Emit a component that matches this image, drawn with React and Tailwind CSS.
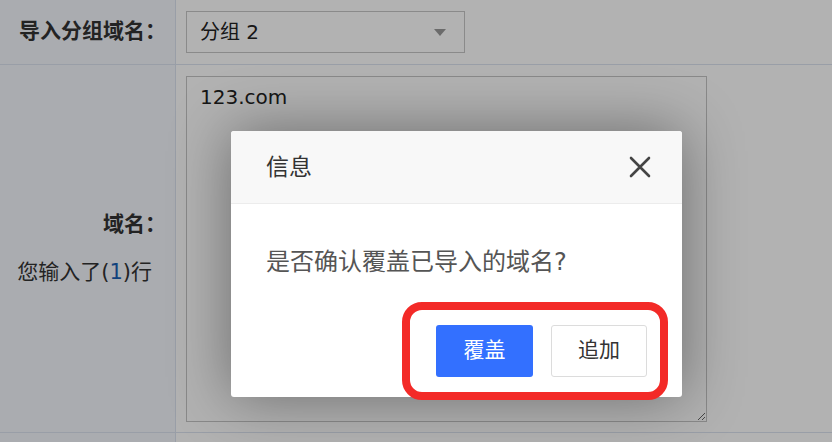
import React from "react";

const font = "font-['DejaVu_Sans','Noto_Sans_CJK_SC',sans-serif]";

function Label({ children, className = "" }) {
  return <div className={`text-right text-[21px] text-[#333] ${className}`}>{children}</div>;
}

export default function App() {
  return (
    <div className={`relative h-[442px] w-[832px] overflow-hidden bg-white ${font}`}>
      {/* form table */}
      <div className="grid grid-cols-[176px_1fr]">
        <div className="flex h-[65px] items-center justify-end border-r border-b border-[#dbe3ef] bg-[#f4f6fc]">
          <Label className="pr-[9px] font-bold">导入分组域名：</Label>
        </div>
        <div className="flex h-[65px] items-center border-b border-[#dbe3ef] pl-[10px]">
          <div className="flex h-[42px] w-[279px] items-center justify-between border border-[#c6c6c6] pl-[13px] pr-[18px] text-[20px] text-[#222]">
            <span>分组 2</span>
            <span className="h-0 w-0 border-x-[6px] border-t-[7px] border-x-transparent border-t-[#9a9a9a]" />
          </div>
        </div>

        <div className="flex h-[368px] flex-col justify-center gap-[17px] border-r border-b border-[#dbe3ef] bg-[#f4f6fc]">
          <Label className="pr-[9px] font-bold">域名：</Label>
          <Label className="pr-[23px]">
            您输入了(<span className="text-[#1a5fb4]">1</span>)行
          </Label>
        </div>
        <div className="h-[368px] border-b border-[#dbe3ef] pl-[10px] pt-[11px]">
          <textarea
            readOnly
            defaultValue="123.com"
            className="block h-[346px] w-[521px] border border-[#c4c4c4] bg-white px-[13px] py-[7px] text-[20px] leading-[26px] text-[#222] outline-none"
          />
        </div>

        <div className="h-[20px] border-r border-[#dbe3ef] bg-[#f4f6fc]" />
        <div className="h-[20px]" />
      </div>

      {/* modal overlay */}
      <div className="absolute inset-0 bg-black/30" />

      <div className="absolute left-[231px] top-[131px] h-[266px] w-[451px] rounded-[3px] bg-white shadow-[0_0_60px_rgba(0,0,0,0.4)]">
        <div className="flex h-[73px] items-center justify-between rounded-t-[3px] border-b border-[#ececec] bg-[#f8f8f8] pl-[35px] pr-[31px]">
          <span className="text-[23px] text-[#333]">信息</span>
          <svg width="22" height="22" viewBox="0 0 22 22" className="text-[#444]">
            <path d="M2 2L20 20M20 2L2 20" stroke="currentColor" strokeWidth="2.6" strokeLinecap="round" />
          </svg>
        </div>
        <div className="px-[35px] pt-[41px] text-[24px] leading-[34px] text-[#555]">是否确认覆盖已导入的域名?</div>
        <div className="mt-[46px] flex justify-end gap-[18px] pr-[35px]">
          <button className="h-[52px] w-[97px] rounded-[3px] bg-[#3370ff] text-[21px] text-white">覆盖</button>
          <button className="h-[52px] w-[96px] rounded-[3px] border border-[#dcdcdc] bg-white text-[21px] text-[#333]">
            追加
          </button>
        </div>

        {/* annotation */}
        <div className="absolute left-[171px] top-[171px] h-[98px] w-[266px] rounded-[20px] border-[8px] border-[#f32a27]" />
      </div>
    </div>
  );
}
